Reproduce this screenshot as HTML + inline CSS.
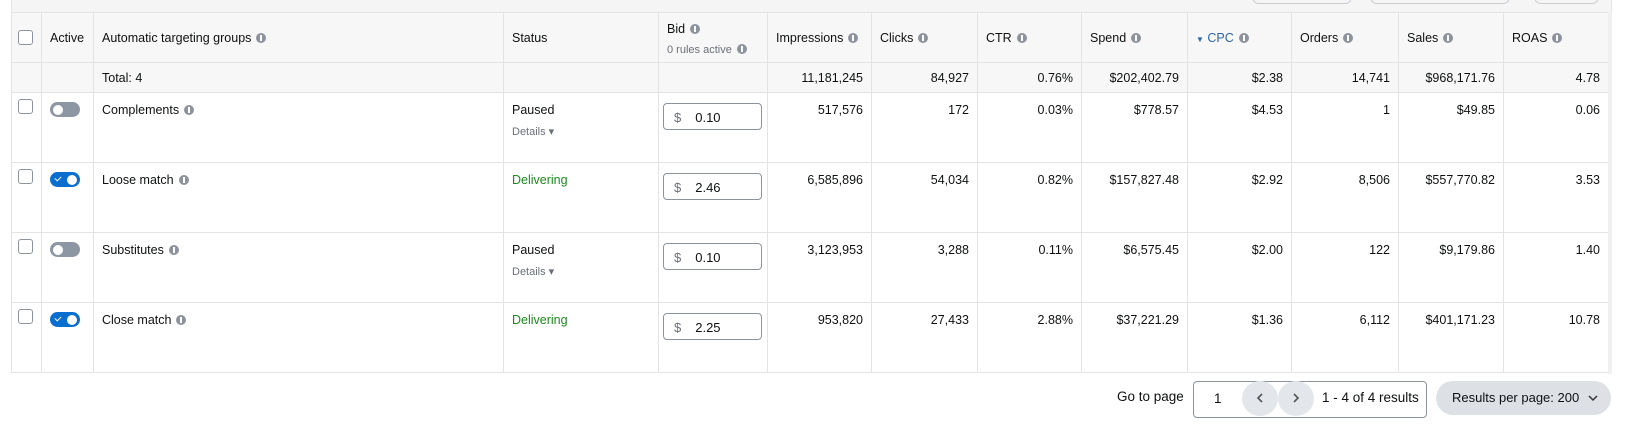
<!DOCTYPE html>
<html><head><style>
*{box-sizing:border-box;margin:0;padding:0}
body{width:1629px;height:437px;background:#fff;font-family:"Liberation Sans",sans-serif;font-size:12.5px;color:#0f1111;position:relative;overflow:hidden}
.band{position:absolute;left:11px;top:0;width:1601px;height:12px;background:#f5f5f5;border-left:1px solid #e3e3e3;border-right:1px solid #e3e3e3}
.pill{position:absolute;top:-10px;height:14px;border:1px solid #c9ccd1;border-radius:8px;background:#f5f5f5}
table{position:absolute;left:11px;top:12px;border-collapse:collapse;table-layout:fixed;width:1598px}
td,th{border:1px solid #e3e3e3;vertical-align:top;font-weight:normal;text-align:left;padding:0 8px;white-space:nowrap}
thead th{background:#f7f7f7;height:50px;vertical-align:middle}
tr.tot td{background:#f7f7f7;height:30px;vertical-align:middle}
tr.r td{height:70px;padding-top:10px}
.n{text-align:right}
.i{display:inline-block;width:10px;height:10px;border-radius:50%;background:#8d939c;vertical-align:-1px;margin-left:5px;position:relative}
.i:after{content:"";position:absolute;left:4px;top:2px;width:2px;height:6px;background:#fff}
.cb{display:inline-block;width:15px;height:15px;border:1px solid #8d939c;border-radius:3px;background:#fff}
.tg{display:inline-block;width:30px;height:15px;border-radius:8px;background:#8d96a3;position:relative;margin-top:1px}
.tg:after{content:"";position:absolute;left:3px;top:2.5px;width:10px;height:10px;border-radius:50%;background:#fff}
.tg.on{background:#0a6ed1}
.tg.on:after{left:17px}
.tg.on:before{content:"";position:absolute;left:5px;top:4px;width:5px;height:3px;border-left:1.5px solid #fff;border-bottom:1.5px solid #fff;transform:rotate(-45deg)}
.sub{color:#6b7078;font-size:11px;margin-top:8px}
.green{color:#1a8c1a}
.inp{width:99px;height:27px;border:1px solid #8d939c;border-radius:4px;padding:6px 10px;font-size:13px}
.inp span{color:#6b7078;margin-right:14px}
.cpc{color:#2b66a8}
</style></head><body>
<div class="band"><div class="pill" style="left:1240px;width:100px"></div><div class="pill" style="left:1358px;width:140px"></div><div class="pill" style="left:1522px;width:65px"></div></div>
<table>
<colgroup><col style="width:30px"><col style="width:52px"><col style="width:410px"><col style="width:155px"><col style="width:109px"><col style="width:104px"><col style="width:106px"><col style="width:104px"><col style="width:106px"><col style="width:104px"><col style="width:107px"><col style="width:105px"><col style="width:105px"></colgroup>
<thead><tr>
<th style="padding:0 6px"><span class="cb" style="vertical-align:middle"></span></th><th>Active</th><th>Automatic targeting groups<span class="i"></span></th><th>Status</th>
<th style="padding-top:2px">Bid<span class="i"></span><div class="sub">0 rules active<span class="i"></span></div></th>
<th>Impressions<span class="i"></span></th><th>Clicks<span class="i"></span></th><th>CTR<span class="i"></span></th><th>Spend<span class="i"></span></th><th class="cpc"><span style="font-size:8px">▼</span> CPC<span class="i"></span></th><th>Orders<span class="i"></span></th><th>Sales<span class="i"></span></th><th>ROAS<span class="i"></span></th>
</tr></thead>
<tbody>
<tr class="tot"><td></td><td></td><td>Total: 4</td><td></td><td></td><td class="n">11,181,245</td><td class="n">84,927</td><td class="n">0.76%</td><td class="n">$202,402.79</td><td class="n">$2.38</td><td class="n">14,741</td><td class="n">$968,171.76</td><td class="n">4.78</td></tr>
<tr class="r"><td style="padding:6px 6px 0"><span class="cb"></span></td><td style="padding-top:8px"><span class="tg"></span></td><td>Complements<span class="i"></span></td><td>Paused<div class="sub">Details ▾</div></td><td style="padding:10px 4px 0"><div class="inp"><span>$</span>0.10</div></td><td class="n">517,576</td><td class="n">172</td><td class="n">0.03%</td><td class="n">$778.57</td><td class="n">$4.53</td><td class="n">1</td><td class="n">$49.85</td><td class="n">0.06</td></tr>
<tr class="r"><td style="padding:6px 6px 0"><span class="cb"></span></td><td style="padding-top:8px"><span class="tg on"></span></td><td>Loose match<span class="i"></span></td><td class="green">Delivering</td><td style="padding:10px 4px 0"><div class="inp"><span>$</span>2.46</div></td><td class="n">6,585,896</td><td class="n">54,034</td><td class="n">0.82%</td><td class="n">$157,827.48</td><td class="n">$2.92</td><td class="n">8,506</td><td class="n">$557,770.82</td><td class="n">3.53</td></tr>
<tr class="r"><td style="padding:6px 6px 0"><span class="cb"></span></td><td style="padding-top:8px"><span class="tg"></span></td><td>Substitutes<span class="i"></span></td><td>Paused<div class="sub">Details ▾</div></td><td style="padding:10px 4px 0"><div class="inp"><span>$</span>0.10</div></td><td class="n">3,123,953</td><td class="n">3,288</td><td class="n">0.11%</td><td class="n">$6,575.45</td><td class="n">$2.00</td><td class="n">122</td><td class="n">$9,179.86</td><td class="n">1.40</td></tr>
<tr class="r"><td style="padding:6px 6px 0"><span class="cb"></span></td><td style="padding-top:8px"><span class="tg on"></span></td><td>Close match<span class="i"></span></td><td class="green">Delivering</td><td style="padding:10px 4px 0"><div class="inp"><span>$</span>2.25</div></td><td class="n">953,820</td><td class="n">27,433</td><td class="n">2.88%</td><td class="n">$37,221.29</td><td class="n">$1.36</td><td class="n">6,112</td><td class="n">$401,171.23</td><td class="n">10.78</td></tr>
</tbody></table>
<div style="position:absolute;left:1608px;top:12px;width:4px;height:362px;background:#f0f0f0"></div>
<div style="position:absolute;left:1117px;top:389px;font-size:13.5px">Go to page</div>
<div style="position:absolute;left:1193px;top:381px;width:234px;height:37px;border:1px solid #8d939c;border-radius:4px;font-size:13.5px">
<span style="position:absolute;left:20px;top:9px">1</span>
<span style="position:absolute;left:48px;top:-1px;width:36px;height:35px;border-radius:50%;background:#e3e6ea"><svg width="36" height="35" viewBox="0 0 36 35"><path d="M20 13l-4 4 4 4" fill="none" stroke="#555" stroke-width="1.6"/></svg></span>
<span style="position:absolute;left:84px;top:-1px;width:36px;height:35px;border-radius:50%;background:#e3e6ea"><svg width="36" height="35" viewBox="0 0 36 35"><path d="M16 13l4 4-4 4" fill="none" stroke="#555" stroke-width="1.6"/></svg></span>
<span style="position:absolute;left:128px;top:8px">1 - 4 of 4 results</span></div>
<div style="position:absolute;left:1436px;top:381px;width:175px;height:34px;border-radius:17px;background:#dde1e6;font-size:13px;line-height:34px;padding-left:16px">Results per page: 200<svg style="position:absolute;left:152px;top:13px" width="10" height="8" viewBox="0 0 10 8"><path d="M1 2l4 4 4-4" fill="none" stroke="#333" stroke-width="1.5"/></svg></div>
</body></html>
